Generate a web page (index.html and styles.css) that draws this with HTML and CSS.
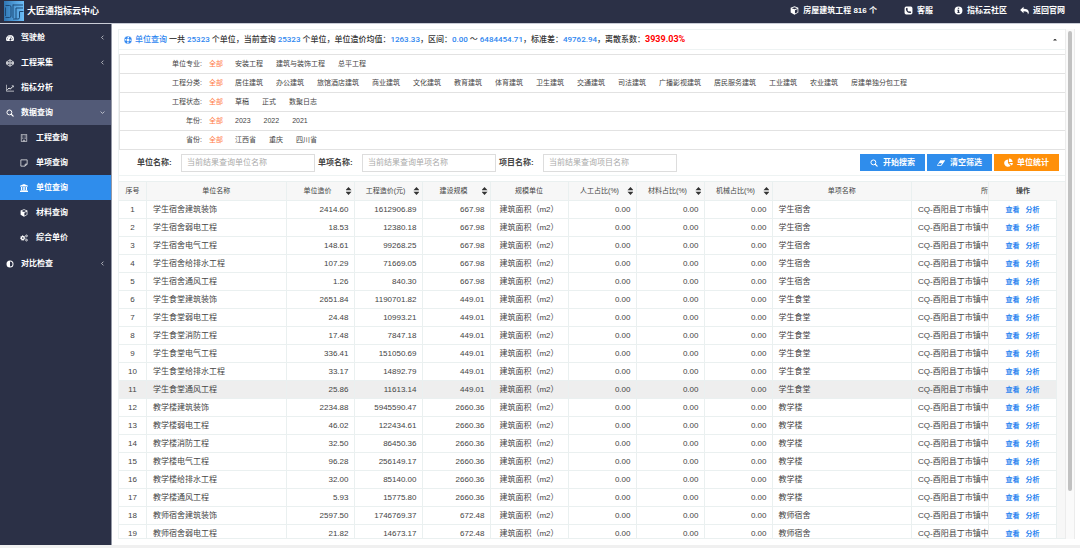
FILE: index.html
```html
<!DOCTYPE html>
<html lang="zh-CN">

<head>
    <meta charset="UTF-8">
    <meta name="viewport" content="width=device-width, initial-scale=1.0">
    <title>大匠通指标云中心</title>
    <link rel="stylesheet" href="styles.css">
</head>

<body>

    <!-- Shared icons -->
    <svg class="sprite" aria-hidden="true">
        <symbol id="i-cube" viewBox="0 0 16 16"><path fill-rule="evenodd" d="M8 .5l6.800 2.600v8.600L8 15.500l-6.800-3.800V3.100zM8 2L3 3.900 8 5.900l5-2zM8.800 7.400v6.100l4.600-2.600V5.500z"/></symbol>
        <symbol id="i-phone" viewBox="0 0 16 16"><path fill-rule="evenodd" d="M4 1h8a3 3 0 0 1 3 3v8a3 3 0 0 1-3 3H4a3 3 0 0 1-3-3V4a3 3 0 0 1 3-3zm1.500 2.200C4 3.500 3.200 4.600 3.400 6c.6 3.400 3.200 6 6.600 6.600 1.400.2 2.600-.6 2.800-2.100L10.400 9l-1.200 1.200C7.600 9.500 6.500 8.400 5.800 6.800L7 5.600z"/></symbol>
        <symbol id="i-info" viewBox="0 0 16 16"><path fill-rule="evenodd" d="M8 1a7 7 0 1 1 0 14A7 7 0 0 1 8 1zM6.800 3v2h2.400V3zM5.800 6.500V8h1v3h-1v1.500h4.400V11h-1V6.500z"/></symbol>
        <symbol id="i-reply" viewBox="0 0 16 16"><path d="M6.300 1.500v3.200c5.500 0 9.400 1.800 9.400 6.300 0 1.600-.7 3-1.700 4 .5-4-2-5.600-7.700-5.600v3.300L.3 7.100z"/></symbol>
        <symbol id="i-dash" viewBox="0 0 16 16"><path fill-rule="evenodd" d="M8 2a8 8 0 0 1 8 8c0 1.500-.4 2.900-1.200 4H1.200A8 8 0 0 1 8 2zM7.200 3.500V5h1.600V3.500zM3.500 5v1.600h1.600V5zM2 9v1.600h1.700V9zm10.300 0v1.600H14V9zM10.200 5l-1.500 4.300a1.900 1.900 0 1 0 1.300.4L11.500 5.500z"/></symbol>
        <symbol id="i-codepen" viewBox="0 0 16 16"><path fill="none" stroke="currentColor" stroke-width="1.500" stroke-linejoin="round" d="M8 1.500l6.800 4.300v4.400L8 14.500 1.200 10.200V5.800zM8 1.500V6M8 10v4.500M1.200 5.800L8 10l6.800-4.200M1.200 10.200L8 6l6.800 4.200"/></symbol>
        <symbol id="i-line" viewBox="0 0 16 16"><path fill="none" stroke="currentColor" stroke-width="1.300" d="M.7 1.500v12.800H16"/><path fill="none" stroke="currentColor" stroke-width="2" d="M2.800 11.500L6.300 8l2.200 2.200 5-5"/><path d="M11 3h4.200v4.200z"/></symbol>
        <symbol id="i-search" viewBox="0 0 16 16"><circle cx="6.800" cy="6.800" r="4.900" fill="none" stroke="currentColor" stroke-width="2"/><path fill="none" stroke="currentColor" stroke-width="2.400" stroke-linecap="round" d="M10.500 10.500l3.800 3.800"/></symbol>
        <symbol id="i-building" viewBox="0 0 16 16"><path fill="none" stroke="currentColor" stroke-width="1.200" d="M2.600.7h10.800v14.600H2.600zM6.500 15v-2.600h3V15"/><path fill="none" stroke="currentColor" stroke-width="1.300" stroke-dasharray="1.300 1.500" d="M4.700 3.500h7M4.700 6.300h7M4.700 9.100h7"/></symbol>
        <symbol id="i-note" viewBox="0 0 16 16"><path fill="none" stroke="currentColor" stroke-width="1.400" stroke-linejoin="round" d="M1.700 1.700h12.600v8.600l-4 4H1.700zM10.300 14v-3.700h3.900"/></symbol>
        <symbol id="i-bank" viewBox="0 0 16 16"><path d="M8 0l8 3.500V5H0V3.500zM2 6h2v6h1.500V6h2v6h1V6h2v6H12V6h2v6h1v1.500H1V12h1zM0 14h16v2H0z"/></symbol>
        <symbol id="i-cogs" viewBox="0 0 16 16"><circle cx="5.500" cy="8" r="3" fill="none" stroke="currentColor" stroke-width="2.600"/><circle cx="5.500" cy="8" r="4.700" fill="none" stroke="currentColor" stroke-width="1.500" stroke-dasharray="1.900 1.800"/><circle cx="13" cy="3.800" r="1.800" fill="none" stroke="currentColor" stroke-width="1.600"/><circle cx="13" cy="12.200" r="1.800" fill="none" stroke="currentColor" stroke-width="1.600"/></symbol>
        <symbol id="i-adjust" viewBox="0 0 16 16"><path fill-rule="evenodd" d="M8 1a7 7 0 1 1 0 14A7 7 0 0 1 8 1zm0 2v10A5 5 0 0 0 8 3z"/></symbol>
        <symbol id="i-ring" viewBox="0 0 16 16"><circle cx="8" cy="8" r="5.300" fill="none" stroke="currentColor" stroke-width="3.600" stroke-dasharray="5.400 2.925" stroke-dashoffset="-1.460"/><circle cx="8" cy="8" r="7.300" fill="none" stroke="currentColor"/><circle cx="8" cy="8" r="3.300" fill="none" stroke="currentColor"/></symbol>
        <symbol id="i-eraser" viewBox="0 0 16 16"><path fill-rule="evenodd" d="M7 2.500h8.500c.5 0 .7.500.4 1L9.600 12.500c-.3.600-.8 1-1.400 1H.7c-.6 0-.8-.5-.5-1L5.900 3.300c.3-.5.600-.8 1.100-.8zM4.200 8.500L2 12h5.700L10 8.500z"/></symbol>
        <symbol id="i-pie" viewBox="0 0 16 16"><path d="M7 2.500v6.600l4.700 4.600A6.600 6.600 0 1 1 7 2.500zM8.700.8A6.500 6.500 0 0 1 15.200 7.300H8.700zM9.200 8.900h6.600a6.500 6.500 0 0 1-2 4.600z"/></symbol>
        <symbol id="i-left" viewBox="0 0 16 16"><path fill="none" stroke="currentColor" stroke-width="2" d="M11 2L5 8l6 6"/></symbol>
        <symbol id="i-down" viewBox="0 0 16 16"><path fill="none" stroke="currentColor" stroke-width="2" d="M2 5l6 6 6-6"/></symbol>
    </svg>

    <header class="topbar">
        <svg class="logo" viewBox="0 0 40 40" aria-hidden="true">
            <defs>
                <linearGradient id="logoFill" x1="0" y1="0" x2="1" y2="0">
                    <stop offset="0" stop-color="#2f76b4"/>
                    <stop offset="1" stop-color="#6dbef8"/>
                </linearGradient>
            </defs>
            <rect width="40" height="40" fill="url(#logoFill)"/>
            <path d="M3 9h8q3 0 3 3v18q0 3-3 3H3M3 13v17M18 7v27M18 8h20M24 14h14M24 14v22M31 21h8M31 21v12q0 3-3 3H18" fill="none" stroke="#1d4a78" stroke-width="2"/>
        </svg>
        <h1>大匠通指标云中心</h1>
        <nav class="top-links">
            <a href="#" class="project"><svg class="icon"><use href="#i-cube"/></svg>房屋建筑工程 816 个</a>
            <a href="#" class="service"><svg class="icon"><use href="#i-phone"/></svg>客服</a>
            <a href="#"><svg class="icon"><use href="#i-info"/></svg>指标云社区</a>
            <a href="#"><svg class="icon"><use href="#i-reply"/></svg>返回官网</a>
        </nav>
    </header>

    <div class="layout">
        <aside class="sidebar">
            <ul class="menu">
                <li><a href="#"><svg class="icon"><use href="#i-dash"/></svg>驾驶舱<svg class="arrow"><use href="#i-left"/></svg></a></li>
                <li><a href="#"><svg class="icon"><use href="#i-codepen"/></svg>工程采集<svg class="arrow"><use href="#i-left"/></svg></a></li>
                <li><a href="#"><svg class="icon"><use href="#i-line"/></svg>指标分析</a></li>
                <li>
                    <a href="#" class="open"><svg class="icon"><use href="#i-search"/></svg>数据查询<svg class="arrow"><use href="#i-down"/></svg></a>
                    <ul class="submenu">
                        <li><a href="#"><svg class="icon"><use href="#i-building"/></svg>工程查询</a></li>
                        <li><a href="#"><svg class="icon"><use href="#i-note"/></svg>单项查询</a></li>
                        <li><a href="#" class="active"><svg class="icon"><use href="#i-bank"/></svg>单位查询</a></li>
                        <li><a href="#"><svg class="icon"><use href="#i-cube"/></svg>材料查询</a></li>
                        <li><a href="#"><svg class="icon"><use href="#i-cogs"/></svg>综合单价</a></li>
                    </ul>
                </li>
                <li><a href="#"><svg class="icon"><use href="#i-adjust"/></svg>对比检查<svg class="arrow"><use href="#i-left"/></svg></a></li>
            </ul>
        </aside>

        <main class="content">
            <div class="panel">
                <div class="summary">
                    <svg class="icon"><use href="#i-ring"/></svg>
                    <p><b>单位查询</b> 一共 <b>25323</b> 个单位，当前查询 <b>25323</b> 个单位，单位造价均值：<b>1263.33</b>，区间：<b>0.00</b> ～ <b>6484454.71</b>，标准差：<b>49762.94</b>，离散系数：<strong>3939.03%</strong></p>
                    <button type="button" class="collapse" aria-label="收起"></button>
                </div>

                <!-- Filters -->
                <div class="filters" id="filters"></div>

                <form class="search" onsubmit="return false">
                    <label for="unitName">单位名称:</label>
                    <input type="text" id="unitName" placeholder="当前结果查询单位名称">
                    <label for="itemName">单项名称:</label>
                    <input type="text" id="itemName" placeholder="当前结果查询单项名称">
                    <label for="projectName">项目名称:</label>
                    <input type="text" id="projectName" placeholder="当前结果查询项目名称">
                    <div class="buttons">
                        <button type="submit"><svg class="icon"><use href="#i-search"/></svg>开始搜索</button>
                        <button type="reset"><svg class="icon"><use href="#i-eraser"/></svg>清空筛选</button>
                        <button type="button" class="stats"><svg class="icon"><use href="#i-pie"/></svg>单位统计</button>
                    </div>
                </form>

                <div class="table-box">
                    <table>
                        <colgroup>
                            <col class="c-no">
                            <col>
                            <col class="c-num">
                            <col class="c-num">
                            <col class="c-num">
                            <col class="c-unit">
                            <col class="c-num">
                            <col class="c-num">
                            <col class="c-num">
                            <col>
                            <col class="c-project">
                            <col class="c-num">
                        </colgroup>
                        <thead>
                            <tr>
                                <th>序号</th>
                                <th>单位名称</th>
                                <th class="sort"><span>单位造价</span></th>
                                <th class="sort"><span>工程造价(元)</span></th>
                                <th class="sort"><span>建设规模</span></th>
                                <th>规模单位</th>
                                <th class="sort"><span>人工占比(%)</span></th>
                                <th class="sort"><span>材料占比(%)</span></th>
                                <th class="sort"><span>机械占比(%)</span></th>
                                <th>单项名称</th>
                                <th class="project-head">所</th>
                                <th class="ops-head">操作</th>
                            </tr>
                        </thead>
                        <tbody id="rows"></tbody>
                    </table>
                </div>
            </div>
            <div class="scrollbar"><div class="thumb"></div></div>
        </main>
    </div>

    <script>
        const filters = [
            ["单位专业", "安装工程 建筑与装饰工程 总平工程"],
            ["工程分类", "居住建筑 办公建筑 旅馆酒店建筑 商业建筑 文化建筑 教育建筑 体育建筑 卫生建筑 交通建筑 司法建筑 广播影视建筑 居民服务建筑 工业建筑 农业建筑 房建单独分包工程"],
            ["工程状态", "草稿 正式 数聚日志"],
            ["年份", "2023 2022 2021"],
            ["省份", "江西省 重庆 四川省"]
        ];

        // item, work, unit price, total price, scale
        const data = [
            ["学生宿舍", "建筑装饰", "2414.60", "1612906.89", "667.98"],
            ["学生宿舍", "弱电工程", "18.53", "12380.18", "667.98"],
            ["学生宿舍", "电气工程", "148.61", "99268.25", "667.98"],
            ["学生宿舍", "给排水工程", "107.29", "71669.05", "667.98"],
            ["学生宿舍", "通风工程", "1.26", "840.30", "667.98"],
            ["学生食堂", "建筑装饰", "2651.84", "1190701.82", "449.01"],
            ["学生食堂", "弱电工程", "24.48", "10993.21", "449.01"],
            ["学生食堂", "消防工程", "17.48", "7847.18", "449.01"],
            ["学生食堂", "电气工程", "336.41", "151050.69", "449.01"],
            ["学生食堂", "给排水工程", "33.17", "14892.79", "449.01"],
            ["学生食堂", "通风工程", "25.86", "11613.14", "449.01"],
            ["教学楼", "建筑装饰", "2234.88", "5945590.47", "2660.36"],
            ["教学楼", "弱电工程", "46.02", "122434.61", "2660.36"],
            ["教学楼", "消防工程", "32.50", "86450.36", "2660.36"],
            ["教学楼", "电气工程", "96.28", "256149.17", "2660.36"],
            ["教学楼", "给排水工程", "32.00", "85140.00", "2660.36"],
            ["教学楼", "通风工程", "5.93", "15775.80", "2660.36"],
            ["教师宿舍", "建筑装饰", "2597.50", "1746769.37", "672.48"],
            ["教师宿舍", "弱电工程", "21.82", "14673.17", "672.48"]
        ];

        document.getElementById("filters").innerHTML = filters.map(([name, items]) => `
            <div class="filter-row">
                <span class="filter-name">${name}:</span>
                <a href="#" class="all">全部</a>
                ${items.split(" ").map(item => `<a href="#">${item}</a>`).join("")}
            </div>`).join("");

        document.getElementById("rows").innerHTML = data.map(([item, work, price, total, scale], i) => `
            <tr class="${i === 10 ? "hover" : ""}">
                <td class="center">${i + 1}</td>
                <td>${item}${work}</td>
                <td class="num">${price}</td>
                <td class="num">${total}</td>
                <td class="num">${scale}</td>
                <td class="center">建筑面积（m2）</td>
                <td class="num">0.00</td>
                <td class="num">0.00</td>
                <td class="num">0.00</td>
                <td>${item}</td>
                <td class="project-cell">CQ-酉阳县丁市镇中</td>
                <td class="ops"><a href="#">查看</a><a href="#">分析</a></td>
            </tr>`).join("");
    </script>

</body>

</html>
```
FILE: styles.css
```css
* {
    box-sizing: border-box;
}

body {
    display: flex;
    flex-direction: column;
    height: 100vh;
    margin: 0;
    padding-bottom: 3px;
    overflow: hidden;
    background-color: #f0f0f0;
    color: #444;
    font-family: "Liberation Sans", "Noto Sans CJK SC", sans-serif;
    font-size: 8px;
    line-height: 12px;
}

a {
    color: inherit;
    text-decoration: none;
}

ul,
p,
h1 {
    margin: 0;
    padding: 0;
    list-style: none;
}

.sprite {
    position: absolute;
    width: 0;
    height: 0;
}

.icon {
    flex: none;
    width: 8px;
    height: 8px;
    fill: currentColor;
}

/* Top bar */
.topbar {
    display: flex;
    flex: none;
    align-items: center;
    height: 24px;
    padding: 0 15px 2px 4px;
    border-bottom: 1px solid #c9ccd6;
    background-color: #2b3046;
    color: #fff;
}

.logo {
    width: 20px;
    height: 20px;
    margin-right: 3px;
}

.topbar h1 {
    font-size: 9px;
}

.top-links {
    display: flex;
    gap: 13px;
    margin-left: auto;
    font-weight: bold;
}

.top-links a {
    display: flex;
    align-items: center;
    gap: 4px;
}

.top-links .icon {
    width: 9px;
    height: 9px;
}

.top-links .project {
    margin-right: 14px;
}

.top-links .service {
    margin-right: 8px;
}

.layout {
    display: flex;
    flex: 1;
    min-height: 0;
}

/* Sidebar */
.sidebar {
    flex: none;
    width: 112px;
    border-right: 1px solid #9599a6;
    background-color: #2b3046;
    color: #fff;
    font-weight: bold;
}

.menu a {
    display: flex;
    align-items: center;
    gap: 7px;
    height: 25px;
    padding: 0 6px;
}

.menu {
    padding-top: 1px;
}

.menu .open {
    background-color: #525a77;
}

.submenu {
    padding-bottom: 1px;
}

.submenu a {
    gap: 8px;
    padding-left: 20px;
}

.submenu .active {
    background-color: #2f8dec;
}

.arrow {
    width: 5px;
    height: 5px;
    margin-left: auto;
}

/* Content */
.content {
    display: flex;
    flex: 1;
    min-width: 0;
    padding: 5px 5px 6px 6px;
    background-color: #fff;
}

.panel {
    display: flex;
    flex: 1;
    flex-direction: column;
    min-width: 0;
    border-left: 1px solid #eef3f3;
}

.summary {
    display: flex;
    flex: none;
    align-items: center;
    gap: 3px;
    height: 21px;
    padding: 0 8px 0 5px;
    border: solid #eef3f3;
    border-width: 1px 0;
    color: #333;
    font-family: Roboto, "Noto Sans CJK SC", sans-serif;
    font-weight: 500;
}

.summary .icon {
    color: #2d85f0;
}

.summary b {
    color: #2d85f0;
    font-weight: 500;
}

.summary strong {
    color: #f00;
    font-size: 9px;
}

.collapse {
    width: 4px;
    height: 2px;
    margin-left: auto;
    padding: 0;
    border: 0;
    background-color: #333;
    clip-path: polygon(50% 0, 100% 100%, 0 100%);
}

.filters {
    flex: none;
    margin-top: 4px;
    border: solid #e2e2e2;
    border-width: 1px 0 0 1px;
    font-size: 7px;
}

.filter-row {
    display: flex;
    align-items: center;
    gap: 13px;
    height: 19px;
    border-bottom: 1px solid #e2e2e2;
    white-space: nowrap;
}

.filter-name {
    width: 82px;
    margin-right: -6px;
    text-align: right;
}

.filter-row .all {
    margin-right: -1px;
    color: #ff7a45;
}

.search {
    display: flex;
    flex: none;
    align-items: center;
    height: 26px;
    padding: 0 6px 0 18px;
    border-bottom: 1px solid #eef3f3;
}

.search label {
    width: 44px;
    font-weight: bold;
}

.search input {
    width: 134px;
    height: 18px;
    margin-right: 3px;
    padding: 0 5px;
    border: 1px solid #ddd;
    color: #444;
    font: inherit;
}

.search input::placeholder {
    color: #aaa;
}

.buttons {
    display: flex;
    gap: 2px;
    margin-left: auto;
}

.buttons button {
    display: flex;
    align-items: center;
    justify-content: center;
    gap: 5px;
    width: 65px;
    height: 17px;
    padding: 0;
    border: 0;
    background-color: #2f8dec;
    color: #fff;
    font: inherit;
    font-weight: bold;
}

.buttons .stats {
    gap: 4px;
    background-color: #ff9009;
}

.stats .icon {
    width: 9px;
    height: 9px;
}

/* Table */
.table-box {
    flex: 1;
    min-height: 0;
    margin-top: 5px;
    padding-right: 8px;
    overflow: hidden;
    border: solid #eaf0f0;
    border-width: 1px 0;
    background-color: #f7f7f7;
}

table {
    width: 100%;
    border-collapse: separate;
    border-spacing: 0;
    table-layout: fixed;
}

.c-no {
    width: 28px;
}

.c-num {
    width: 68px;
}

.c-unit {
    width: 78px;
}

.c-project {
    width: 77px;
}

th,
td {
    height: 18px;
    padding: 0 6px;
    overflow: hidden;
    border-right: 1px solid #eaf0f0;
    border-bottom: 1px solid #eaf0f0;
    white-space: nowrap;
}

th {
    height: 19px;
    padding: 0;
    font-size: 7px;
    font-weight: normal;
}

.sort span {
    display: flex;
    align-items: center;
    justify-content: center;
    padding-left: 3px;
}

.sort span::after {
    flex: none;
    width: 6px;
    height: 8px;
    margin: 0 2px 0 auto;
    background-color: #333;
    clip-path: polygon(50% 0, 100% 40%, 0 40%, 0 60%, 100% 60%, 50% 100%, 0 60%, 0 40%);
    content: "";
}

.sort span::before {
    margin-left: auto;
    content: "";
}

td {
    background-color: #fff;
}

.hover td {
    background-color: #eee;
}

.center {
    padding: 0;
    text-align: center;
}

.num {
    padding-right: 5px;
    text-align: right;
}

.project-head {
    text-align: right;
}

.project-cell {
    padding-right: 0;
}

th.ops-head {
    border-right: 0;
    font-weight: bold;
}

.ops {
    padding: 0;
    color: #2d85f0;
    font-size: 7px;
    font-weight: bold;
    text-align: center;
}

.ops a + a {
    margin-left: 6px;
}

/* Page scrollbar */
.scrollbar {
    flex: none;
    width: 10px;
    padding: 2px;
    border: solid #ececec;
    border-width: 0 1px;
    background-color: #fafafa;
}

.thumb {
    height: 91%;
    border-radius: 3px;
    background-color: #c1c1c1;
}
```
